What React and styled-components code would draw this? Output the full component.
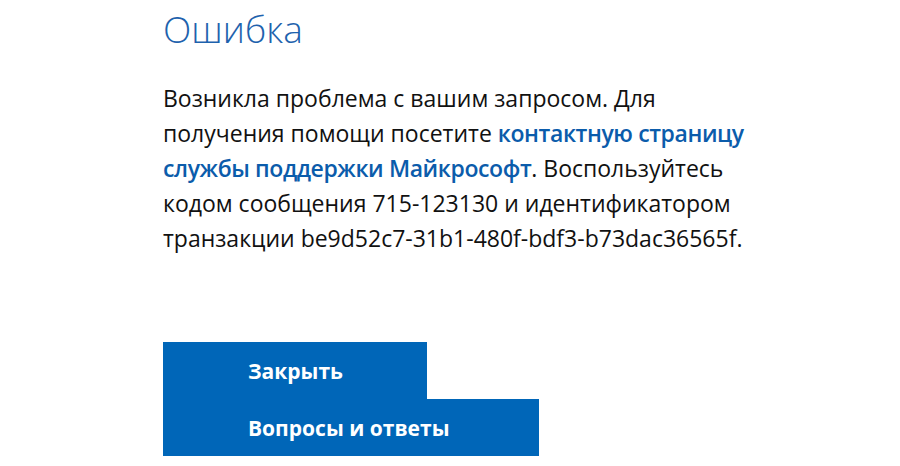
import React from 'react'
import styled, { createGlobalStyle } from 'styled-components'

const GlobalStyle = createGlobalStyle`
  html, body {
    margin: 0;
    padding: 0;
    background: #ffffff;
  }
  body {
    font-family: "Open Sans", "Noto Sans", "DejaVu Sans", sans-serif;
    color: #1b1b1b;
  }
`

const Page = styled.div`
  width: 900px;
  height: 466px;
  overflow: hidden;
  padding-left: 163px;
  box-sizing: border-box;
`

const Title = styled.h1`
  margin: 0;
  padding-top: 3px;
  font-size: 37px;
  line-height: 52px;
  font-weight: 300;
  color: #1e62ad;
`

const Message = styled.p`
  margin: 26px 0 0;
  width: 640px;
  font-size: 23px;
  line-height: 35px;
  color: #111111;
`

const Link = styled.a`
  color: #0b5cab;
  font-weight: 600;
  letter-spacing: -0.4px;
  text-decoration: none;
`

const Actions = styled.div`
  margin-top: 86px;
  display: flex;
  flex-direction: column;
  align-items: flex-start;
`

const Button = styled.button`
  width: ${({ $width }) => $width}px;
  height: 57px;
  padding: 0 0 0 85px;
  border: none;
  border-radius: 0;
  background: #0066b8;
  color: #ffffff;
  font-family: inherit;
  font-size: 21px;
  font-weight: 700;
  text-align: left;
  cursor: pointer;
`

const buttons = [
  { label: 'Закрыть', width: 264 },
  { label: 'Вопросы и ответы', width: 376 },
]

function App() {
  return (
    <Page>
      <GlobalStyle />
      <Title>Ошибка</Title>
      <Message>
        Возникла проблема с вашим запросом. Для
        <br />
        получения помощи посетите <Link href="#">контактную страницу</Link>
        <br />
        <Link href="#">службы поддержки Майкрософт</Link>. Воспользуйтесь
        <br />
        кодом сообщения 715-123130 и идентификатором
        <br />
        транзакции be9d52c7-31b1-480f-bdf3-b73dac36565f.
      </Message>
      <Actions>
        {buttons.map(item => (
          <Button key={item.label} $width={item.width}>
            {item.label}
          </Button>
        ))}
      </Actions>
    </Page>
  )
}

export default App
